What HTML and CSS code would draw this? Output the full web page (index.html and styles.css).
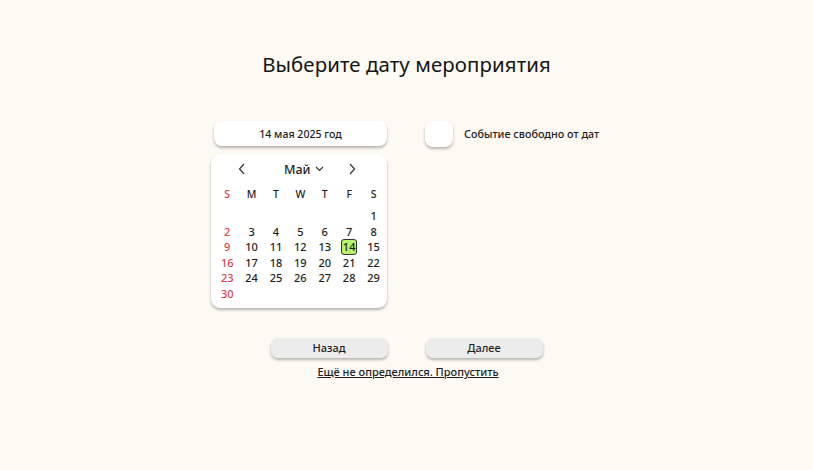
FILE: index.html
```html
<!DOCTYPE html>
<html lang="ru">
<head>
<meta charset="utf-8">
<title>Выберите дату мероприятия</title>
<link rel="stylesheet" href="styles.css">
</head>
<body>
<main class="page">
  <h1 class="title">Выберите дату мероприятия</h1>
  <div class="form-row">
    <div class="left-col">
      <div class="date-input">14 мая 2025 год</div>
      <div class="calendar">
        <div class="cal-head">
          <span class="nav prev"><svg width="10" height="12" viewBox="0 0 10 12"><path d="M7 1 L2.5 6 L7 11" fill="none" stroke="#333" stroke-width="1.2"/></svg></span>
          <span class="month">Май <svg width="9" height="6" viewBox="0 0 9 6"><path d="M1 1 L4.5 4.5 L8 1" fill="none" stroke="#333" stroke-width="1.2"/></svg></span>
          <span class="nav next"><svg width="10" height="12" viewBox="0 0 10 12"><path d="M3 1 L7.5 6 L3 11" fill="none" stroke="#333" stroke-width="1.2"/></svg></span>
        </div>
        <div class="cal-grid">
          <span class="wd sun">S</span><span class="wd">M</span><span class="wd">T</span><span class="wd">W</span><span class="wd">T</span><span class="wd">F</span><span class="wd">S</span>
          <span></span><span></span><span></span><span></span><span></span><span></span><span class="d">1</span>
          <span class="d sun">2</span><span class="d">3</span><span class="d">4</span><span class="d">5</span><span class="d">6</span><span class="d">7</span><span class="d">8</span>
          <span class="d sun">9</span><span class="d">10</span><span class="d">11</span><span class="d">12</span><span class="d">13</span><span class="d"><b class="sel">14</b></span><span class="d">15</span>
          <span class="d sun">16</span><span class="d">17</span><span class="d">18</span><span class="d">19</span><span class="d">20</span><span class="d">21</span><span class="d">22</span>
          <span class="d sun">23</span><span class="d">24</span><span class="d">25</span><span class="d">26</span><span class="d">27</span><span class="d">28</span><span class="d">29</span>
          <span class="d sun">30</span>
        </div>
      </div>
    </div>
    <div class="right-col">
      <span class="checkbox"></span>
      <span class="check-label">Событие свободно от дат</span>
    </div>
  </div>
  <div class="buttons">
    <button class="btn">Назад</button>
    <button class="btn">Далее</button>
  </div>
  <a class="skip" href="#">Ещё не определился. Пропустить</a>
</main>
</body>
</html>
```

FILE: styles.css
```css
* { box-sizing: border-box; }
html, body { margin: 0; padding: 0; }
body {
  background: #fdfaf3;
  font-family: "Noto Sans", "DejaVu Sans", sans-serif;
  color: #1e1e1e;
  width: 813px;
  height: 470px;
  overflow: hidden;
}
.page {
  display: flex;
  flex-direction: column;
  align-items: center;
  padding-top: 49px;
}
.title {
  margin: 0;
  font-size: 20.4px;
  font-weight: 400;
  line-height: 30px;
  letter-spacing: 0.1px;
  color: #151515;
}
.form-row {
  align-self: flex-start;
  display: flex;
  gap: 38px;
  margin-top: 42px;
  padding-left: 211px;
}
.left-col {
  width: 176px;
  display: flex;
  flex-direction: column;
}
.date-input {
  margin-left: 3px;
  width: 173px;
  height: 25px;
  background: #fff;
  border-radius: 8px;
  box-shadow: 0 2px 3px rgba(0,0,0,0.28);
  font-size: 10.6px;
  font-weight: 500;
  display: flex;
  align-items: center;
  justify-content: center;
}
.calendar {
  margin-top: 8px;
  width: 176px;
  height: 154px;
  background: #fff;
  border-radius: 9px;
  box-shadow: 0 2px 3px rgba(0,0,0,0.28);
  padding: 4px 1px 0 4px;
}
.cal-head {
  height: 22px;
  display: flex;
  align-items: center;
  font-size: 12.5px;
  font-weight: 500;
}
.nav { display: flex; align-items: center; }
.prev { margin-left: 22px; }
.month {
  margin-left: 37px;
  display: flex;
  align-items: center;
  gap: 4px;
}
.next { margin-left: 23px; }
.cal-grid {
  margin-top: 8px;
  display: grid;
  grid-template-columns: repeat(7, 24.4px);
  grid-template-rows: 20px;
  grid-auto-rows: 15.6px;
  font-size: 11px;
  font-weight: 500;
  text-align: center;
  line-height: 15.6px;
}
.wd { font-size: 10.5px; font-weight: 500; line-height: 13px; }
.sun { color: #d8414a; }
.sel {
  display: inline-block;
  width: 16px;
  height: 16px;
  line-height: 14px;
  border: 1px solid #333;
  border-radius: 3px;
  background: #b6f26a;
  font-weight: 500;
}
.right-col {
  display: flex;
  align-items: flex-start;
  gap: 11px;
}
.checkbox {
  width: 28px;
  height: 26px;
  background: #fff;
  border-radius: 8px;
  box-shadow: 0 2px 3px rgba(0,0,0,0.28);
}
.check-label {
  font-size: 10.8px;
  font-weight: 500;
  line-height: 26px;
}
.buttons {
  margin-top: 30px;
  display: flex;
  gap: 38px;
}
.btn {
  width: 117px;
  height: 20px;
  border: none;
  border-radius: 7px;
  background: #ececec;
  box-shadow: 0 2px 3px rgba(0,0,0,0.28);
  font-family: inherit;
  font-size: 11px;
  font-weight: 500;
  color: #1e1e1e;
  padding: 0 0 1px;
}
.skip {
  margin-top: 6px;
  margin-left: 3px;
  font-size: 11px;
  font-weight: 500;
  color: #1e1e1e;
  text-decoration: underline;
}
```
